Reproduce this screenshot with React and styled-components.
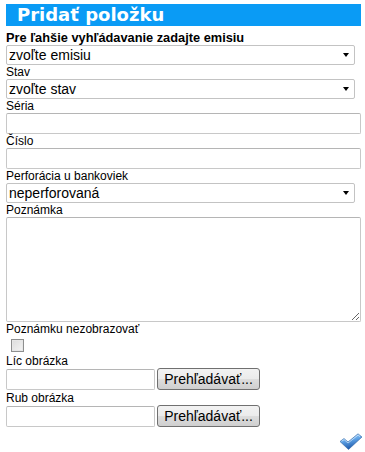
import styled, { createGlobalStyle } from "styled-components";

const GlobalStyle = createGlobalStyle`
  html, body {
    margin: 0;
    padding: 0;
    background: #fff;
  }
  body {
    font-family: "Liberation Sans", Arial, sans-serif;
    color: #000;
  }
`;

const Page = styled.div`
  width: 365px;
  height: 452px;
  padding: 4px 4px 0 6px;
  box-sizing: border-box;
  display: flex;
  flex-direction: column;
`;

const Header = styled.h1`
  margin: 0;
  height: 22px;
  width: 355px;
  background: #0a9bf5;
  color: #fff;
  font-family: "DejaVu Sans", Verdana, sans-serif;
  font-weight: bold;
  font-size: 18px;
  line-height: 22px;
  padding-left: 11px;
  box-sizing: border-box;
`;

const Form = styled.form`
  display: flex;
  flex-direction: column;
  margin-top: 5px;
`;

const Label = styled.label`
  display: block;
  font-size: ${(p) => (p.$bold ? "12.8px" : "12px")};
  font-weight: ${(p) => (p.$bold ? "bold" : "normal")};
  line-height: 14px;
  height: 14px;
  white-space: nowrap;
`;

const SelectWrap = styled.div`
  position: relative;
  width: 349px;
  height: 20px;
`;

const Select = styled.select`
  appearance: none;
  width: 100%;
  height: 100%;
  box-sizing: border-box;
  border: 1px solid #c3c3c3;
  border-radius: 2px;
  background: #fff;
  font-family: "Liberation Sans", Arial, sans-serif;
  font-size: 14px;
  color: #000;
  padding: 0 0 0 2px;
  margin: 0;
  outline: none;
`;

const Arrow = styled.span`
  position: absolute;
  right: 6px;
  top: 8px;
  width: 0;
  height: 0;
  border-left: 3.5px solid transparent;
  border-right: 3.5px solid transparent;
  border-top: 4px solid #000;
  pointer-events: none;
`;

const TextInput = styled.input`
  display: block;
  width: ${(p) => p.$w || "355px"};
  height: 21px;
  box-sizing: border-box;
  border: 1px solid #c8c8c8;
  border-top-color: #b5b5b5;
  border-radius: 2px;
  margin: 0;
  padding: 0 2px;
  font-family: "Liberation Sans", Arial, sans-serif;
  font-size: 13px;
  outline: none;
`;

const Note = styled.textarea`
  display: block;
  width: 355px;
  height: 105px;
  box-sizing: border-box;
  border: 1px solid #c8c8c8;
  border-top-color: #b5b5b5;
  border-radius: 2px;
  margin: 0;
  padding: 2px;
  font-family: "Liberation Sans", Arial, sans-serif;
  font-size: 13px;
  outline: none;
`;

const Check = styled.input`
  appearance: none;
  width: 13px;
  height: 13px;
  margin: 3px 0 2px 5px;
  box-sizing: border-box;
  border: 1px solid #8e8f8f;
  background: linear-gradient(135deg, #dcdcdc 0%, #f4f4f4 100%);
  box-shadow: inset 0 0 0 1px #e6e6e6;
`;

const FileRow = styled.div`
  display: flex;
  align-items: center;
  gap: 2px;
  height: 22px;
  margin-bottom: 1px;
`;

const BrowseBtn = styled.button`
  width: 103px;
  height: 22px;
  box-sizing: border-box;
  border: 1px solid #707070;
  border-radius: 3px;
  background: linear-gradient(#f2f2f2 0%, #ebebeb 50%, #dddddd 51%, #cfcfcf 100%);
  font-family: "Liberation Sans", Arial, sans-serif;
  font-size: 14px;
  color: #000;
  padding: 0;
`;

const Footer = styled.div`
  display: flex;
  justify-content: flex-end;
  margin-top: 5px;
  margin-right: -2px;
`;

const SubmitIcon = () => (
  <svg width="24" height="17" viewBox="0 0 23 17">
    <defs>
      <linearGradient id="chk" x1="0" y1="0" x2="0.3" y2="1">
        <stop offset="0" stopColor="#c4e2fb" />
        <stop offset="0.45" stopColor="#64a8ea" />
        <stop offset="1" stopColor="#1f5aab" />
      </linearGradient>
    </defs>
    <path
      d="M0.5 8.5 L4.5 5.5 L8.5 9 L18.5 0.8 L22.5 4 L9 16.5 Z"
      fill="url(#chk)"
      stroke="#2d63a3"
      strokeWidth="0.6"
      strokeLinejoin="round"
    />
    <path d="M2 8.3 L4.6 6.6 L8.5 10 L18.6 2 L20.5 3.6" fill="none" stroke="#e8f4ff" strokeWidth="0.8" opacity="0.8" />
  </svg>
);

const App = () => {
  return (
    <Page>
      <GlobalStyle />
      <Header>Pridať položku</Header>
      <Form onSubmit={(e) => e.preventDefault()}>
        <Label $bold>Pre ľahšie vyhľádavanie zadajte emisiu</Label>
        <SelectWrap>
          <Select defaultValue="">
            <option value="">zvoľte emisiu</option>
          </Select>
          <Arrow />
        </SelectWrap>
        <Label>Stav</Label>
        <SelectWrap>
          <Select defaultValue="">
            <option value="">zvoľte stav</option>
          </Select>
          <Arrow />
        </SelectWrap>
        <Label>Séria</Label>
        <TextInput type="text" />
        <Label>Číslo</Label>
        <TextInput type="text" />
        <Label>Perforácia u bankoviek</Label>
        <SelectWrap>
          <Select defaultValue="n">
            <option value="n">neperforovaná</option>
          </Select>
          <Arrow />
        </SelectWrap>
        <Label>Poznámka</Label>
        <Note />
        <Label>Poznámku nezobrazovať</Label>
        <Check type="checkbox" />
        <Label>Líc obrázka</Label>
        <FileRow>
          <TextInput type="text" $w="149px" />
          <BrowseBtn type="button">Prehľadávať...</BrowseBtn>
        </FileRow>
        <Label>Rub obrázka</Label>
        <FileRow>
          <TextInput type="text" $w="149px" />
          <BrowseBtn type="button">Prehľadávať...</BrowseBtn>
        </FileRow>
        <Footer>
          <SubmitIcon />
        </Footer>
      </Form>
    </Page>
  );
};

export default App;
